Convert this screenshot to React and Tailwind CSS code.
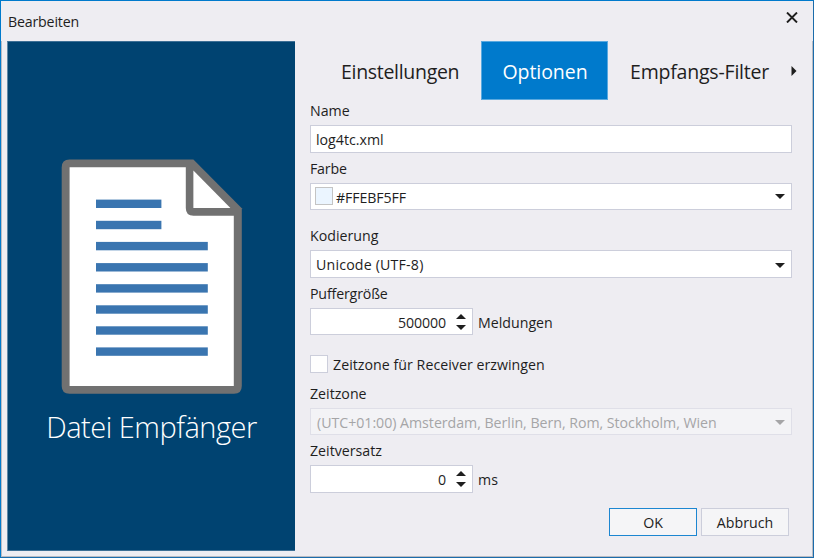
const inputBox = 'flex items-center border border-[#cccedb] bg-white'

function Caret({ className }) {
  return (
    <svg width="10" height="5" viewBox="0 0 10 5" className={className} fill="currentColor">
      <path d="M0 0H10L5 5Z" />
    </svg>
  )
}

function Label({ className = '', children }) {
  return <div className={`h-5 leading-5 ${className}`}>{children}</div>
}

function Spinner({ value, className }) {
  return (
    <div className={`${inputBox} w-[163px] pr-1.5 ${className}`}>
      <span className="flex-1 pt-0.5 pr-[9px] text-right tracking-[-0.12px]">{value}</span>
      <span className="flex w-[11px] flex-col items-center gap-[6px]">
        <Caret className="rotate-180" />
        <Caret />
      </span>
    </div>
  )
}

function FileIcon() {
  return (
    <svg width="182" height="236" viewBox="61 159 182 236" className="ml-[53px] mt-[117px] block">
      <path
        d="M69.5 159.6H193.4L241.8 208.2V386Q241.8 393.8 234 393.8H69.5Q61.7 393.8 61.7 386V167.4Q61.7 159.6 69.5 159.6Z"
        fill="#717171"
      />
      <path d="M69.6 167.2H185.8V208Q185.8 215.8 193.5 215.8H233.8V386H69.6Z" fill="#fff" />
      <path d="M193.4 170.6V208H230.4Z" fill="#fff" />
      <g fill="#3a75b0">
        <rect x="96" y="199.6" width="65.4" height="8.4" />
        <rect x="96" y="220.8" width="65.4" height="8.4" />
        <rect x="96" y="241.9" width="111.8" height="8.4" />
        <rect x="96" y="263.1" width="111.8" height="8.4" />
        <rect x="96" y="284.2" width="111.8" height="8.4" />
        <rect x="96" y="305.3" width="111.8" height="8.4" />
        <rect x="96" y="326.3" width="111.8" height="8.4" />
        <rect x="96" y="347.4" width="111.8" height="8.4" />
      </g>
    </svg>
  )
}

export default function App() {
  return (
    <div className="flex h-[558px] w-[814px] flex-col overflow-hidden border border-t-[#007acc] border-r-[#1b6cab] border-b-[#1b6cab] border-l-[#007acc] bg-[#eeedf2] font-['Open_Sans','Noto_Sans',sans-serif] text-[14.2px] whitespace-nowrap text-[#1e1e1e]">
      <header className="flex h-10 shrink-0 items-start justify-between pl-[7px] pr-[15px]">
        <span className="mt-[11px] leading-5 tracking-[-0.18px]">Bearbeiten</span>
        <svg width="12" height="11" viewBox="0 0 12 11" className="mt-[11px]" stroke="#1e1e1e" strokeWidth="1.9" fill="none">
          <path d="M1 0.5L11 10.5M11 0.5L1 10.5" />
        </svg>
      </header>
      <div className="flex flex-1 border-x border-b border-[#b9bbc3] pl-[5px]">
        <aside className="h-[510px] w-[288px] border-y border-l border-y-[#3d6f95] border-l-[#5f88a8] bg-[#004371]">
          <FileIcon />
          <div className="mt-[12px] text-center text-[29px] leading-[40px] font-light tracking-[-0.5px] text-white">
            Datei Empfänger
          </div>
        </aside>
        <main className="w-[517px] pl-[15px]">
          <nav className="flex h-[59px] items-center text-[19.5px]">
            <span className="w-[171px] pt-0.5 pl-[31px] tracking-[-0.3px]">Einstellungen</span>
            <span className="flex h-[59px] w-[127px] items-center justify-center border border-[#5aa9df] bg-[#007acc] pt-0.5 pl-px tracking-[-0.05px] text-white">
              Optionen
            </span>
            <span className="w-[183px] pt-0.5 pl-[22px] tracking-[-0.2px]">Empfangs-Filter</span>
            <svg width="6" height="10" viewBox="0 0 6 10" fill="#1e1e1e">
              <path d="M0.5 0L5.5 5L0.5 10Z" />
            </svg>
          </nav>

          <div className="w-[482px]">
            <Label className="mt-px">Name</Label>
            <div className={`${inputBox} mt-[4px] h-7 pt-0.5 pl-[5px]`}>
              <span>log4tc.xml</span>
            </div>

            <Label className="mt-[6px] tracking-[-0.2px]">Farbe</Label>
            <div className={`${inputBox} mt-[4px] h-[27px] justify-between pl-1 pr-1.5`}>
              <span className="flex items-center gap-[3px]">
                <span className="size-[18px] border border-[#c4c4c4] bg-[#ebf5ff]" />
                <span className="pt-0.5 tracking-[-0.1px]">#FFEBF5FF</span>
              </span>
              <Caret />
            </div>

            <Label className="mt-[16px]">Kodierung</Label>
            <div className={`${inputBox} mt-[4px] h-7 justify-between pl-[5px] pr-1.5`}>
              <span className="pt-0.5 tracking-[0.18px]">Unicode (UTF-8)</span>
              <Caret className="mt-0.5" />
            </div>

            <Label className="mt-[6px] tracking-[-0.16px]">Puffergröße</Label>
            <div className="mt-[4px] flex items-center gap-[5px]">
              <Spinner value="500000" className="h-[27px]" />
              <span className="pt-0.5">Meldungen</span>
            </div>

            <div className="mt-[19px] flex h-[19px] items-center gap-[5px]">
              <span className="size-[18px] border border-[#cccedb] bg-[#fefefe]" />
              <span className="pt-0.5 tracking-[0.03px]">Zeitzone für Receiver erzwingen</span>
            </div>

            <Label className="mt-[11px]">Zeitzone</Label>
            <div className="mt-[4px] flex h-[27px] items-center justify-between border border-[#dfdfe8] bg-[#f3f3f6] pl-[6px] pr-1.5 text-[#a5a5a7]">
              <span className="pt-0.5 tracking-[-0.03px]">(UTC+01:00) Amsterdam, Berlin, Bern, Rom, Stockholm, Wien</span>
              <Caret className="mt-0.5" />
            </div>

            <Label className="mt-[6px]">Zeitversatz</Label>
            <div className="mt-[4px] flex items-center gap-[5px]">
              <Spinner value="0" className="h-7" />
              <span className="pt-0.5">ms</span>
            </div>

            <div className="mt-[15px] flex justify-end gap-1 pr-[3px]">
              <button className="h-7 w-[88px] border border-[#1c86d1] bg-[#f5f5f7] pt-0.5">OK</button>
              <button className="h-7 w-[88px] border border-[#cccedb] bg-[#f5f5f7] pt-0.5">Abbruch</button>
            </div>
          </div>
        </main>
      </div>
    </div>
  )
}
